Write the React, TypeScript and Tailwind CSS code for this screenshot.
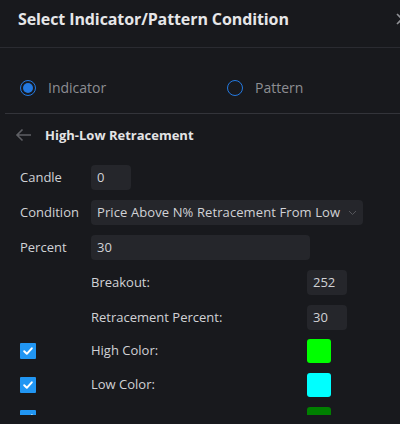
import React from "react";

const Check = () => (
  <div className="w-[16px] h-[16px] bg-[#2196f3] flex items-center justify-center rounded-[1px]">
    <svg width="12" height="12" viewBox="0 0 12 12" fill="none">
      <path d="M2.2 6.3 L4.8 8.8 L9.8 3.3" stroke="#fff" strokeWidth="2" strokeLinecap="round" strokeLinejoin="round" />
    </svg>
  </div>
);

export default function App() {
  const font = { fontFamily: '"Open Sans", "Noto Sans", sans-serif' };
  return (
    <div className="w-[400px] h-[424px] bg-[#18191d] overflow-hidden flex flex-col text-[#d1d2d6]" style={font}>
      <div className="h-[48px] shrink-0 border-b border-[#2a2b31] flex items-center pl-[18px] pb-[10px]">
        <div className="text-[16px] font-bold text-[#e6e6e8] tracking-[-0.1px]">Select Indicator/Pattern Condition</div>
        <div className="ml-auto mr-[-9px] text-[#9a9ba0]">
          <svg width="14" height="14" viewBox="0 0 14 14"><path d="M2 2 L12 12 M12 2 L2 12" stroke="#8f9095" strokeWidth="1.6" /></svg>
        </div>
      </div>
      <div className="ml-[5px] h-[66px] shrink-0 border-b border-[#33343a] flex items-center pl-[15px] pt-[18px] pb-[4px]">
        <div className="flex items-center w-[207px]">
          <div className="w-[16px] h-[16px] rounded-full border-[1.5px] border-[#2479e0] flex items-center justify-center">
            <div className="w-[10px] h-[10px] rounded-full bg-[#2479e0]" />
          </div>
          <span className="ml-[12px] text-[14px] text-[#8d8e93]">Indicator</span>
        </div>
        <div className="flex items-center">
          <div className="w-[16px] h-[16px] rounded-full border-[1.5px] border-[#2479e0]" />
          <span className="ml-[12px] text-[14px] text-[#8d8e93]">Pattern</span>
        </div>
      </div>
      <div className="h-[41px] shrink-0 flex items-center pl-[15px] pt-[3px]">
        <svg width="17" height="14" viewBox="0 0 17 14" fill="none" className="mt-[-3px]">
          <path d="M16 7 H2 M7.5 1.5 L2 7 L7.5 12.5" stroke="#5e5f64" strokeWidth="1.6" />
        </svg>
        <span className="ml-[13px] text-[13px] font-bold text-[#e3e3e5]">High-Low Retracement</span>
      </div>
      <div className="h-[260px] shrink-0 overflow-hidden pt-[10px] flex flex-col gap-[10px] text-[13px]">
        <div className="flex items-center h-[25px] shrink-0">
          <span className="w-[91px] pl-[20px]">Candle</span>
          <div className="w-[40px] h-[25px] rounded-[4px] bg-[#25262b] flex items-center pl-[6px]">0</div>
        </div>
        <div className="flex items-center h-[25px] shrink-0">
          <span className="w-[91px] pl-[20px]">Condition</span>
          <div className="w-[272px] h-[25px] rounded-[4px] bg-[#25262b] flex items-center pl-[6px] pr-[6px]">
            <span className="tracking-[0.1px]">Price Above N% Retracement From Low</span>
            <svg className="ml-auto" width="9" height="6" viewBox="0 0 9 6" fill="none"><path d="M1 1 L4.5 4.5 L8 1" stroke="#55565b" strokeWidth="1" /></svg>
          </div>
        </div>
        <div className="flex items-center h-[25px] shrink-0">
          <span className="w-[91px] pl-[20px]">Percent</span>
          <div className="w-[219px] h-[25px] rounded-[4px] bg-[#25262b] flex items-center pl-[6px]">30</div>
        </div>
        <div className="flex items-center h-[25px] shrink-0">
          <span className="w-[91px]" />
          <span className="w-[216px]">Breakout:</span>
          <div className="w-[40px] h-[25px] rounded-[4px] bg-[#25262b] flex items-center pl-[6px]">252</div>
        </div>
        <div className="flex items-center h-[25px] shrink-0">
          <span className="w-[91px]" />
          <span className="w-[216px]">Retracement Percent:</span>
          <div className="w-[40px] h-[25px] rounded-[4px] bg-[#25262b] flex items-center pl-[6px]">30</div>
        </div>
        <div className="flex items-center h-[24px] shrink-0 mt-[-1px]">
          <div className="w-[91px] pl-[20px]"><Check /></div>
          <span className="w-[216px]">High Color:</span>
          <div className="w-[24px] h-[24px] rounded-[3px] bg-[#00ff00]" />
        </div>
        <div className="flex items-center h-[24px] shrink-0">
          <div className="w-[91px] pl-[20px]"><Check /></div>
          <span className="w-[216px]">Low Color:</span>
          <div className="w-[24px] h-[24px] rounded-[3px] bg-[#00ffff]" />
        </div>
        <div className="flex items-start h-[24px] shrink-0">
          <div className="w-[91px] pl-[20px] pt-[3px]"><Check /></div>
          <span className="w-[216px]" />
          <div className="w-[24px] h-[24px] rounded-[3px] bg-[#008000]" />
        </div>
      </div>
    </div>
  );
}
